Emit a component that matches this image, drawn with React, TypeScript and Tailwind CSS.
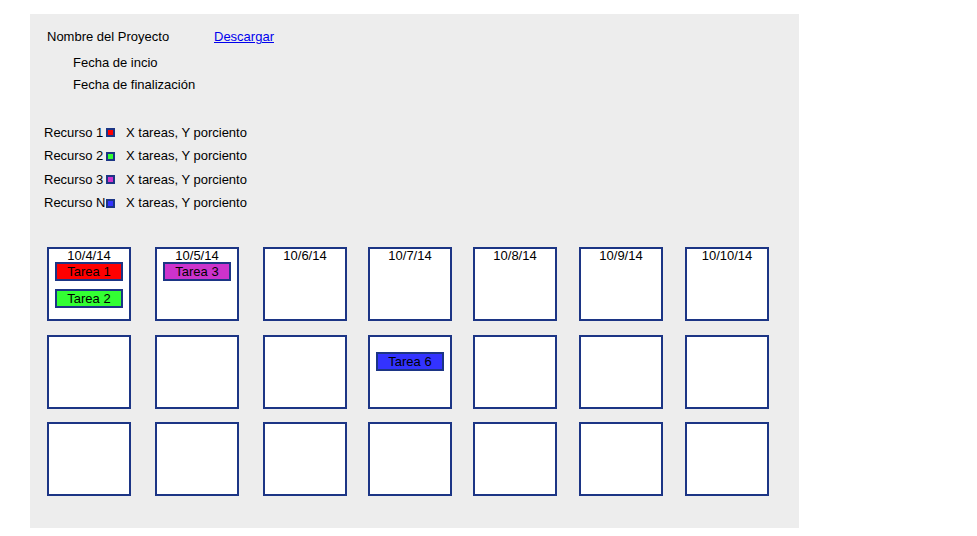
const BORDER = 'border-[#1c3585]';

type Task = { name: string; color: string };

const dates = ['10/4/14', '10/5/14', '10/6/14', '10/7/14', '10/8/14', '10/9/14', '10/10/14'];

const resources = [
  { label: 'Recurso 1', color: 'bg-[#ff0000]' },
  { label: 'Recurso 2', color: 'bg-[#33ff33]' },
  { label: 'Recurso 3', color: 'bg-[#cc33cc]' },
  { label: 'Recurso N', color: 'bg-[#3333ff]' },
];

// tasks keyed by "row-col"
const tasks: Record<string, Task[]> = {
  '0-0': [
    { name: 'Tarea 1', color: 'bg-[#ff0000]' },
    { name: 'Tarea 2', color: 'bg-[#33ff33]' },
  ],
  '0-1': [{ name: 'Tarea 3', color: 'bg-[#cc33cc]' }],
  '1-3': [{ name: 'Tarea 6', color: 'bg-[#3333ff]' }],
};

function TaskBar({ task }: { task: Task }) {
  return (
    <div
      className={`mx-auto w-[68px] h-[19px] border-2 ${BORDER} ${task.color} text-center text-[13px] leading-[16px]`}
    >
      {task.name}
    </div>
  );
}

function DayCell({ row, col }: { row: number; col: number }) {
  const list = tasks[`${row}-${col}`] || [];
  return (
    <div className={`w-[84px] h-[74px] border-2 ${BORDER} bg-white`}>
      {row === 0 ? (
        <div className="h-[13px] text-center text-[13px] leading-[14px]">{dates[col]}</div>
      ) : (
        <div className="h-[15px]" />
      )}
      <div className="flex flex-col gap-[8px]">
        {list.map((t) => (
          <TaskBar key={t.name} task={t} />
        ))}
      </div>
    </div>
  );
}

export default function App() {
  return (
    <div
      className="min-h-screen bg-white pt-[14px] pl-[30px] text-black"
      style={{ fontFamily: '"Liberation Sans", Arial, sans-serif' }}
    >
      <div className="w-[769px] h-[514px] bg-[#ededed] pt-[15px] px-[17px]">
        <div className="flex h-[16px] text-[13px] leading-[16px]">
          <span className="w-[167px]">Nombre del Proyecto</span>
          <a href="#" className="text-[#0000ee] underline">
            Descargar
          </a>
        </div>
        <div className="mt-[10px] pl-[26px] h-[16px] text-[13px] leading-[16px]">Fecha de incio</div>
        <div className="mt-[6px] pl-[26px] h-[16px] text-[13px] leading-[16px]">Fecha de finalización</div>

        <div className="mt-[28px] -ml-[3px]">
          {resources.map((r) => (
            <div key={r.label} className="flex items-center h-[23.5px] text-[13px] leading-[16px]">
              <span className="w-[62px] whitespace-nowrap">{r.label}</span>
              <span className={`w-[9px] h-[9px] border-2 ${BORDER} ${r.color}`} />
              <span className="ml-[11px]">X tareas, Y porciento</span>
            </div>
          ))}
        </div>

        <div className="mt-[32px] grid grid-cols-[108px_108px_105px_105px_106px_106px_84px] gap-y-[13.5px]">
          {[0, 1, 2].map((row) =>
            dates.map((_, col) => <DayCell key={`${row}-${col}`} row={row} col={col} />)
          )}
        </div>
      </div>
    </div>
  );
}
